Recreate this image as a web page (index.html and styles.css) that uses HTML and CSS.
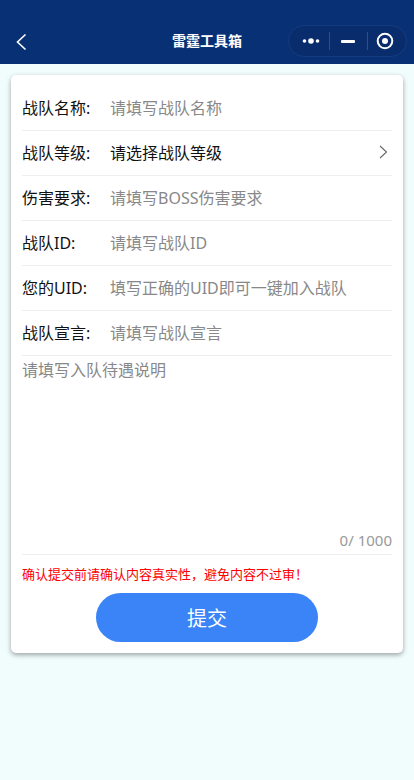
FILE: index.html
```html
<!DOCTYPE html>
<html lang="zh-CN">
<head>
<meta charset="utf-8">
<title>雷霆工具箱</title>
<link rel="stylesheet" href="styles.css">
</head>
<body>
<header class="navbar">
  <svg class="back" width="12" height="18" viewBox="0 0 12 18"><path d="M10.5 1.5 2.5 9l8 7.5" fill="none" stroke="#fff" stroke-width="1.6"/></svg>
  <div class="title">雷霆工具箱</div>
  <div class="capsule">
    <svg class="dots" width="18" height="8" viewBox="0 0 18 8"><circle cx="2.5" cy="4" r="1.8" fill="#fff"/><circle cx="9" cy="4" r="2.8" fill="#fff"/><circle cx="15.5" cy="4" r="1.8" fill="#fff"/></svg>
    <span class="sep sep-first"></span>
    <span class="minus"></span>
    <span class="sep sep-second"></span>
    <svg width="18" height="18" viewBox="0 0 18 18"><circle cx="9" cy="9" r="7.3" fill="none" stroke="#fff" stroke-width="2"/><circle cx="9" cy="9" r="3" fill="#fff"/></svg>
  </div>
</header>
<main class="card">
  <div class="row"><span class="label">战队名称:</span><span class="ph">请填写战队名称</span></div>
  <div class="row"><span class="label">战队等级:</span><span class="value">请选择战队等级</span>
    <svg class="chev" width="9" height="14" viewBox="0 0 9 14"><path d="M1 1l6.5 6L1 13" fill="none" stroke="#666" stroke-width="1.1"/></svg></div>
  <div class="row"><span class="label">伤害要求:</span><span class="ph">请填写BOSS伤害要求</span></div>
  <div class="row"><span class="label">战队ID:</span><span class="ph">请填写战队ID</span></div>
  <div class="row"><span class="label">您的UID:</span><span class="ph">填写正确的UID即可一键加入战队</span></div>
  <div class="row"><span class="label">战队宣言:</span><span class="ph">请填写战队宣言</span></div>
  <div class="area">
    <div class="ph">请填写入队待遇说明</div>
    <div class="count">0/ 1000</div>
  </div>
  <p class="warn">确认提交前请确认内容真实性，避免内容不过审！</p>
  <button class="submit">提交</button>
</main>
</body>
</html>
```
FILE: styles.css
```css
* { box-sizing: border-box; }
html, body { margin: 0; height: 100%; }
body {
  background: #f1fcfd;
  font-family: "Noto Sans", "Noto Sans CJK SC", sans-serif;
  overflow: hidden;
}
.navbar {
  height: 64px;
  background: #083074;
  display: flex;
  align-items: center;
  padding: 20px 7px 0 15px;
  position: relative;
}
.back { margin-top: -1px; }
.title {
  position: absolute;
  left: 0;
  right: 0;
  top: 31px;
  text-align: center;
  color: #fff;
  font-size: 14px;
  font-weight: 700;
  line-height: 20px;
}
.capsule {
  margin-left: auto;
  margin-top: -2px;
  width: 119px;
  height: 32px;
  border-radius: 16px;
  background: #082c6c;
  border: 1px solid #143c80;
  display: flex;
  align-items: center;
  padding: 0 0 0 13px;
}
.dots { margin-right: 9px; }
.sep { width: 1px; height: 18px; background: #2c4f88; }
.sep-first { margin-right: 11px; }
.sep-second { margin-right: 8px; }
.minus { width: 14px; height: 3px; background: #fff; border-radius: 1px; margin-right: 12px; }
.card {
  margin: 11px 11px 0;
  height: 578px;
  padding: 11px 11px 0;
  background: #fff;
  border-radius: 5px;
  box-shadow: 0 2px 5px rgba(0,0,0,.35);
  display: flex;
  flex-direction: column;
}
.row {
  height: 45px;
  flex: none;
  display: flex;
  align-items: center;
  border-bottom: 1px solid #eee;
  font-size: 16px;
  padding-bottom: 2px;
}
.label { width: 88px; color: #111; flex: none; }
.ph { color: #888; font-size: 16px; }
.value { color: #111; }
.chev { margin-left: auto; margin-right: 4px; }
.area {
  height: 199px;
  flex: none;
  border-bottom: 1px solid #eee;
  display: flex;
  flex-direction: column;
  justify-content: space-between;
  padding: 1px 0 3px;
}
.count { text-align: right; color: #999; font-size: 15px; line-height: 22px; }
.warn {
  margin: 10px 0 0;
  color: #f00;
  font-size: 13px;
  line-height: 18px;
  white-space: nowrap;
}
.submit {
  display: block;
  margin: 10px auto 0;
  width: 222px;
  height: 49px;
  flex: none;
  border: 0;
  border-radius: 25px;
  background: #3a84f8;
  color: #fff;
  font: 20px "Noto Sans", "Noto Sans CJK SC", sans-serif;
}
```
